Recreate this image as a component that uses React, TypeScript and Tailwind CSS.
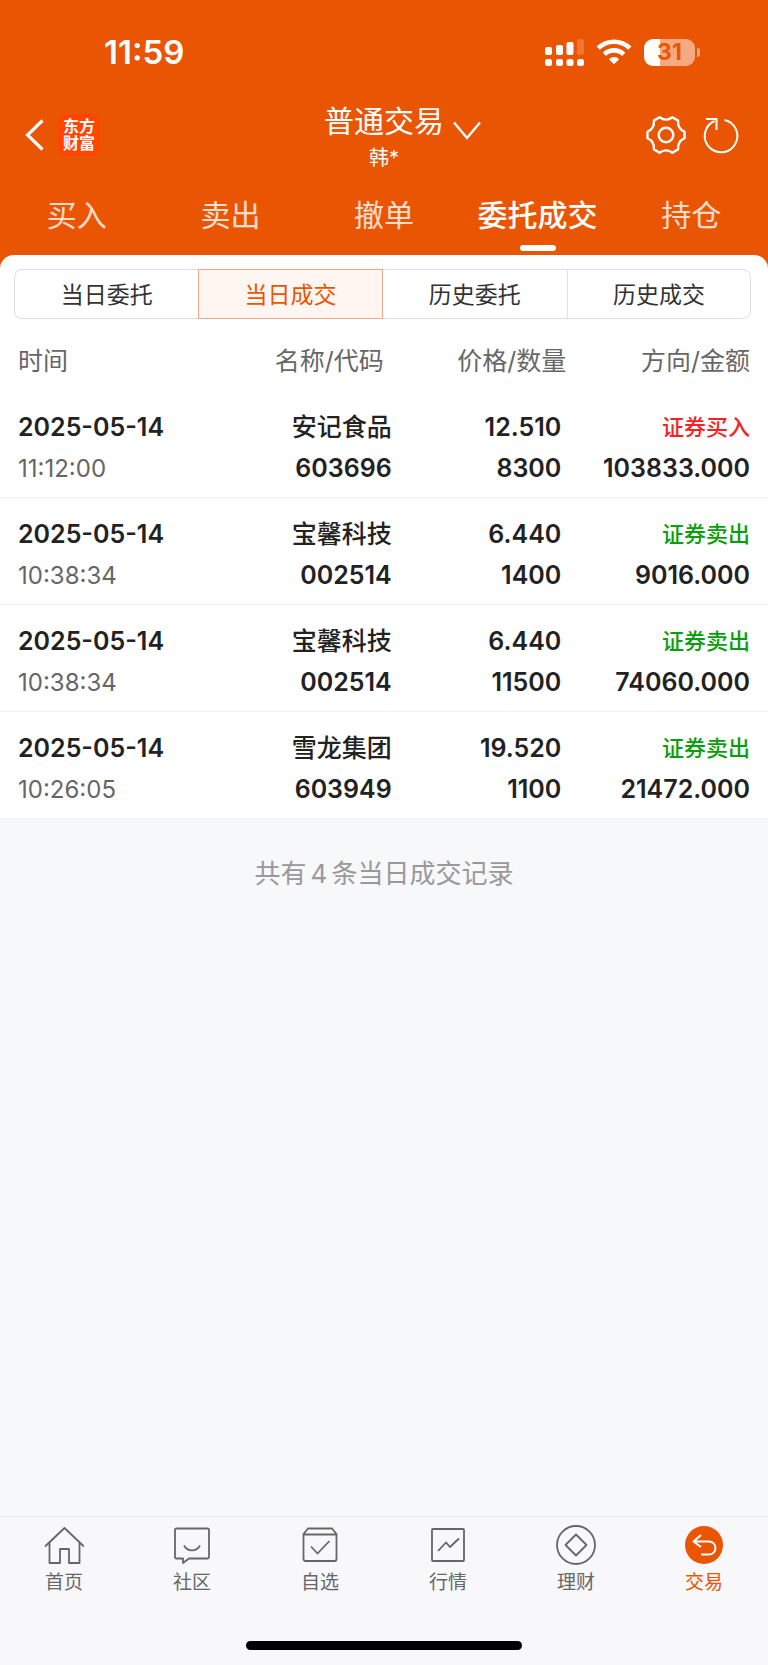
import type { ReactNode } from 'react'
import clsx from 'clsx'

type Deal = {
    date: string
    time: string
    name: string
    code: string
    price: string
    count: string
    side: 'buy' | 'sell'
    amount: string
}

const deals: Deal[] = [
    { date: '2025-05-14', time: '11:12:00', name: '安记食品', code: '603696', price: '12.510', count: '8300', side: 'buy', amount: '103833.000' },
    { date: '2025-05-14', time: '10:38:34', name: '宝馨科技', code: '002514', price: '6.440', count: '1400', side: 'sell', amount: '9016.000' },
    { date: '2025-05-14', time: '10:38:34', name: '宝馨科技', code: '002514', price: '6.440', count: '11500', side: 'sell', amount: '74060.000' },
    { date: '2025-05-14', time: '10:26:05', name: '雪龙集团', code: '603949', price: '19.520', count: '1100', side: 'sell', amount: '21472.000' },
]

const tabs = ['买入', '卖出', '撤单', '委托成交', '持仓']
const ranges = ['当日委托', '当日成交', '历史委托', '历史成交']

// six-lobed outline around (20, 20)
function gearOutline() {
    const point = (deg: number, r: number) => {
        const a = (deg * Math.PI) / 180
        return `${(20 + r * Math.cos(a)).toFixed(2)} ${(20 + r * Math.sin(a)).toFixed(2)}`
    }
    let d = `M${point(-10, 18.8)}`
    for (let k = 0; k < 360; k += 60) {
        d += `L${point(k + 10, 18.8)}C${point(k + 18, 15.8)} ${point(k + 20, 15.4)} ${point(k + 30, 15.4)}`
        d += `C${point(k + 40, 15.4)} ${point(k + 42, 15.8)} ${point(k + 50, 18.8)}`
    }
    return d + 'Z'
}

function SignalIcon() {
    return (
        <svg width="39" height="27" viewBox="0 0 39 27" fill="#fff">
            <rect x="0" y="8" width="7" height="8" rx="2" />
            <rect x="11" y="6" width="7" height="10" rx="2" />
            <rect x="21.500" y="3" width="7" height="13" rx="2" />
            <rect x="32" y="0" width="7" height="16" rx="2" fillOpacity="0.2" />
            <rect x="0" y="20" width="7" height="7" rx="2.500" />
            <rect x="11" y="20" width="7" height="7" rx="2.500" />
            <rect x="21.500" y="20" width="7" height="7" rx="2.500" />
            <rect x="32" y="20" width="7" height="7" rx="2.500" />
        </svg>
    )
}

function WifiIcon() {
    return (
        <svg width="36" height="26" viewBox="0 0 36 26" fill="none" stroke="#fff" strokeWidth="4.600">
            <path d="M2.200 9.200a22.500 22.500 0 0 1 31.600 0" />
            <path d="M8.300 15.400a13.800 13.800 0 0 1 19.400 0" />
            <path d="M18 25.300l-5.100-5.100a7.300 7.300 0 0 1 10.200 0z" fill="#fff" stroke="none" />
        </svg>
    )
}

function StatusBar() {
    return (
        <div className="flex h-[102px] items-center justify-between pl-[104px] pr-[68px] pt-[2px]">
            <span className="text-[33px] font-semibold leading-10">11:59</span>
            <div className="flex items-center">
                <SignalIcon />
                <div className="ml-3">
                    <WifiIcon />
                </div>
                <div className="ml-3 flex h-[27px] w-[51px] items-center justify-center rounded-[9px] bg-linear-to-r from-white from-31% to-white/50 to-31% text-[23px] font-bold leading-none text-[#ea5504]">
                    31
                </div>
                <div className="ml-[2px] h-[9px] w-[3px] rounded-r-full bg-white/50" />
            </div>
        </div>
    )
}

function TitleBar() {
    return (
        <div className="grid grid-cols-[1fr_auto_1fr] items-center">
            <div className="flex items-center pb-1 pl-6">
                <button type="button" aria-label="返回" className="flex w-[34px]">
                    <svg width="22" height="32" viewBox="0 0 22 32" fill="none" stroke="#fff" strokeWidth="3.200">
                        <path d="M18.500 1.500L3.500 16l15 14.500" />
                    </svg>
                </button>
                <div className="flex h-[42px] w-[42px] flex-col items-center justify-center rounded-[9px] bg-[#ff4500] text-[16px] font-bold leading-[17px]">
                    <span>东方</span>
                    <span>财富</span>
                </div>
            </div>
            <div className="flex flex-col items-center">
                <h1 className="text-[30px] leading-[38px]">普通交易</h1>
                <span className="mt-1 text-[20px] leading-7">韩*</span>
            </div>
            <div className="flex items-center justify-between pb-1 pl-2 pr-[28px]">
                <button type="button" aria-label="切换账户" className="pb-2">
                    <svg width="30" height="20" viewBox="0 0 30 20" fill="none" stroke="#fff" strokeWidth="2.400">
                        <path d="M2 1.500L15 17 28 1.500" />
                    </svg>
                </button>
                <div className="flex items-center gap-4">
                    <button type="button" aria-label="设置">
                        <svg width="40" height="40" viewBox="0 0 40 40" fill="none" stroke="#fff" strokeWidth="2.400" strokeLinejoin="round">
                            <path d={gearOutline()} />
                            <circle cx="20" cy="20" r="7.300" />
                        </svg>
                    </button>
                    <button type="button" aria-label="刷新">
                        <svg width="38" height="40" viewBox="0 0 38 40" fill="none" stroke="#fff" strokeWidth="2">
                            <path d="M22.500 5A16.300 16.300 0 1 1 12.500 6" />
                            <path d="M4 4h10.500v11" />
                        </svg>
                    </button>
                </div>
            </div>
        </div>
    )
}

function DealTable() {
    return (
        <table className="w-full table-fixed text-right text-[#222]">
            <colgroup>
                <col className="w-[26%]" />
                <col className="w-[25%]" />
                <col className="w-[23%]" />
                <col className="w-[26%]" />
            </colgroup>
            <thead className="text-[25px] leading-[36px] text-[#666]">
                <tr>
                    <th className="pb-3 pl-[18px] pt-6 text-left font-normal">时间</th>
                    <th className="pb-3 pr-2 pt-6 font-normal">名称/代码</th>
                    <th className="pb-3 pr-[2px] pt-6 font-normal">价格/数量</th>
                    <th className="pb-3 pr-[18px] pt-6 font-normal">方向/金额</th>
                </tr>
            </thead>
            <tbody className="text-[25px] font-semibold leading-[41px]">
                {deals.map((deal, i) => (
                    <tr key={i} className="border-b border-[#f1f2f4]">
                        <td className="pb-2 pl-[18px] pt-4 text-left">
                            <div>{deal.date}</div>
                            <div className="text-[24px] font-normal text-[#666]">{deal.time}</div>
                        </td>
                        <td className="pb-2 pt-4">
                            <div className="font-medium">{deal.name}</div>
                            <div>{deal.code}</div>
                        </td>
                        <td className="pb-2 pr-[7px] pt-4">
                            <div>{deal.price}</div>
                            <div>{deal.count}</div>
                        </td>
                        <td className="pb-2 pr-[18px] pt-4">
                            <div className={clsx('text-[22px] font-medium', deal.side === 'buy' ? 'text-[#f92222]' : 'text-[#0a9f0a]')}>
                                {deal.side === 'buy' ? '证券买入' : '证券卖出'}
                            </div>
                            <div>{deal.amount}</div>
                        </td>
                    </tr>
                ))}
            </tbody>
        </table>
    )
}

function NavIcon({ children }: { children: ReactNode }) {
    return (
        <svg width="40" height="40" viewBox="0 0 40 40" fill="none" stroke="#666" strokeWidth="1.800" strokeLinejoin="round">
            {children}
        </svg>
    )
}

const navItems = [
    {
        label: '首页',
        icon: (
            <NavIcon>
                <path d="M1 21.500L20.500 3 40 21.500M5.500 17.500V38H16V24h9v14h10.500V17.500" />
            </NavIcon>
        ),
    },
    {
        label: '社区',
        icon: (
            <NavIcon>
                <path d="M4.500 3.500h31a1.500 1.500 0 0 1 1.500 1.500v27a1.500 1.500 0 0 1-1.500 1.500H17L11 38v-4.500H4.500A1.500 1.500 0 0 1 3 32V5a1.500 1.500 0 0 1 1.500-1.500z" />
                <path d="M12 20.500c3.500 6.500 12.500 6.500 16 0" />
            </NavIcon>
        ),
    },
    {
        label: '自选',
        icon: (
            <NavIcon>
                <path d="M3.500 9L8 3.500h24L36.500 9v25a2 2 0 0 1-2 2h-29a2 2 0 0 1-2-2zM3.500 9.500h33M11 21.500l6.500 7L29.500 16" />
            </NavIcon>
        ),
    },
    {
        label: '行情',
        icon: (
            <NavIcon>
                <rect x="4" y="4" width="32" height="32" rx="1" />
                <path d="M10 26l8-8.500 4 4.500 9-8.500" />
            </NavIcon>
        ),
    },
    {
        label: '理财',
        icon: (
            <NavIcon>
                <circle cx="20" cy="20" r="19" />
                <path d="M20 9.500L30.500 20 20 30.500 9.500 20z" />
            </NavIcon>
        ),
    },
    {
        label: '交易',
        icon: (
            <NavIcon>
                <circle cx="20" cy="20" r="19" fill="#ea5504" stroke="none" />
                <path d="M17 10L9.500 16.500 17 22M9.500 16.500H25a6.500 6.500 0 0 1 0 13h-8" stroke="#fff" strokeWidth="2" />
            </NavIcon>
        ),
    },
]

export default function App() {
    return (
        <div className="flex min-h-screen flex-col bg-[#f7f8fa] font-['Inter','Noto_Sans_CJK_SC',sans-serif]">
            <header className="bg-[#ea5504] text-white">
                <StatusBar />
                <TitleBar />
                <nav className="grid grid-cols-5 pt-5">
                    {tabs.map((tab) => {
                        const active = tab === '委托成交'
                        return (
                            <a
                                key={tab}
                                href="#"
                                className={clsx('flex flex-col items-center text-[30px] leading-[46px]', active ? 'font-medium' : 'font-normal text-white/80')}
                            >
                                {tab}
                                <span className={clsx('mb-1 mt-[7px] h-[6px] w-9 rounded-full', active && 'bg-white')} />
                            </a>
                        )
                    })}
                </nav>
            </header>

            <main className="flex-1">
                <div className="bg-[#ea5504]">
                    <section className="rounded-t-[14px] bg-white pt-[14px]">
                        <div className="ml-[14px] mr-[17px] grid grid-cols-4">
                            {ranges.map((range) => (
                                <button
                                    key={range}
                                    type="button"
                                    className={clsx(
                                        'h-[50px] border pt-[2px] text-[23px] first:rounded-l-lg last:rounded-r-lg',
                                        range === '当日成交' ? 'border-[#f0a98a] bg-[#fff5f1] text-[#ea5504]' : 'border-[#dcdfe4] text-[#333]',
                                        range === '当日委托' && 'border-r-0',
                                        range === '历史委托' && 'border-x-0',
                                    )}
                                >
                                    {range}
                                </button>
                            ))}
                        </div>
                        <DealTable />
                    </section>
                </div>
                <p className="flex justify-center gap-1 pt-[35px] text-[26px] leading-10 text-[#999]">
                    <span>共有</span>
                    <span>4</span>
                    <span>条当日成交记录</span>
                </p>
            </main>

            <footer className="border-t border-[#e8e9eb] bg-[#f8f8fa]">
                <nav className="grid grid-cols-6 pt-2">
                    {navItems.map((item) => (
                        <a
                            key={item.label}
                            href="#"
                            className={clsx('flex flex-col items-center text-[19px] leading-7', item.label === '交易' ? 'text-[#ea5504]' : 'text-[#666]')}
                        >
                            {item.icon}
                            <span className="mt-1">{item.label}</span>
                        </a>
                    ))}
                </nav>
                <div className="mx-auto mb-[15px] mt-11 h-[9px] w-[36%] rounded-full bg-black" />
            </footer>
        </div>
    )
}
